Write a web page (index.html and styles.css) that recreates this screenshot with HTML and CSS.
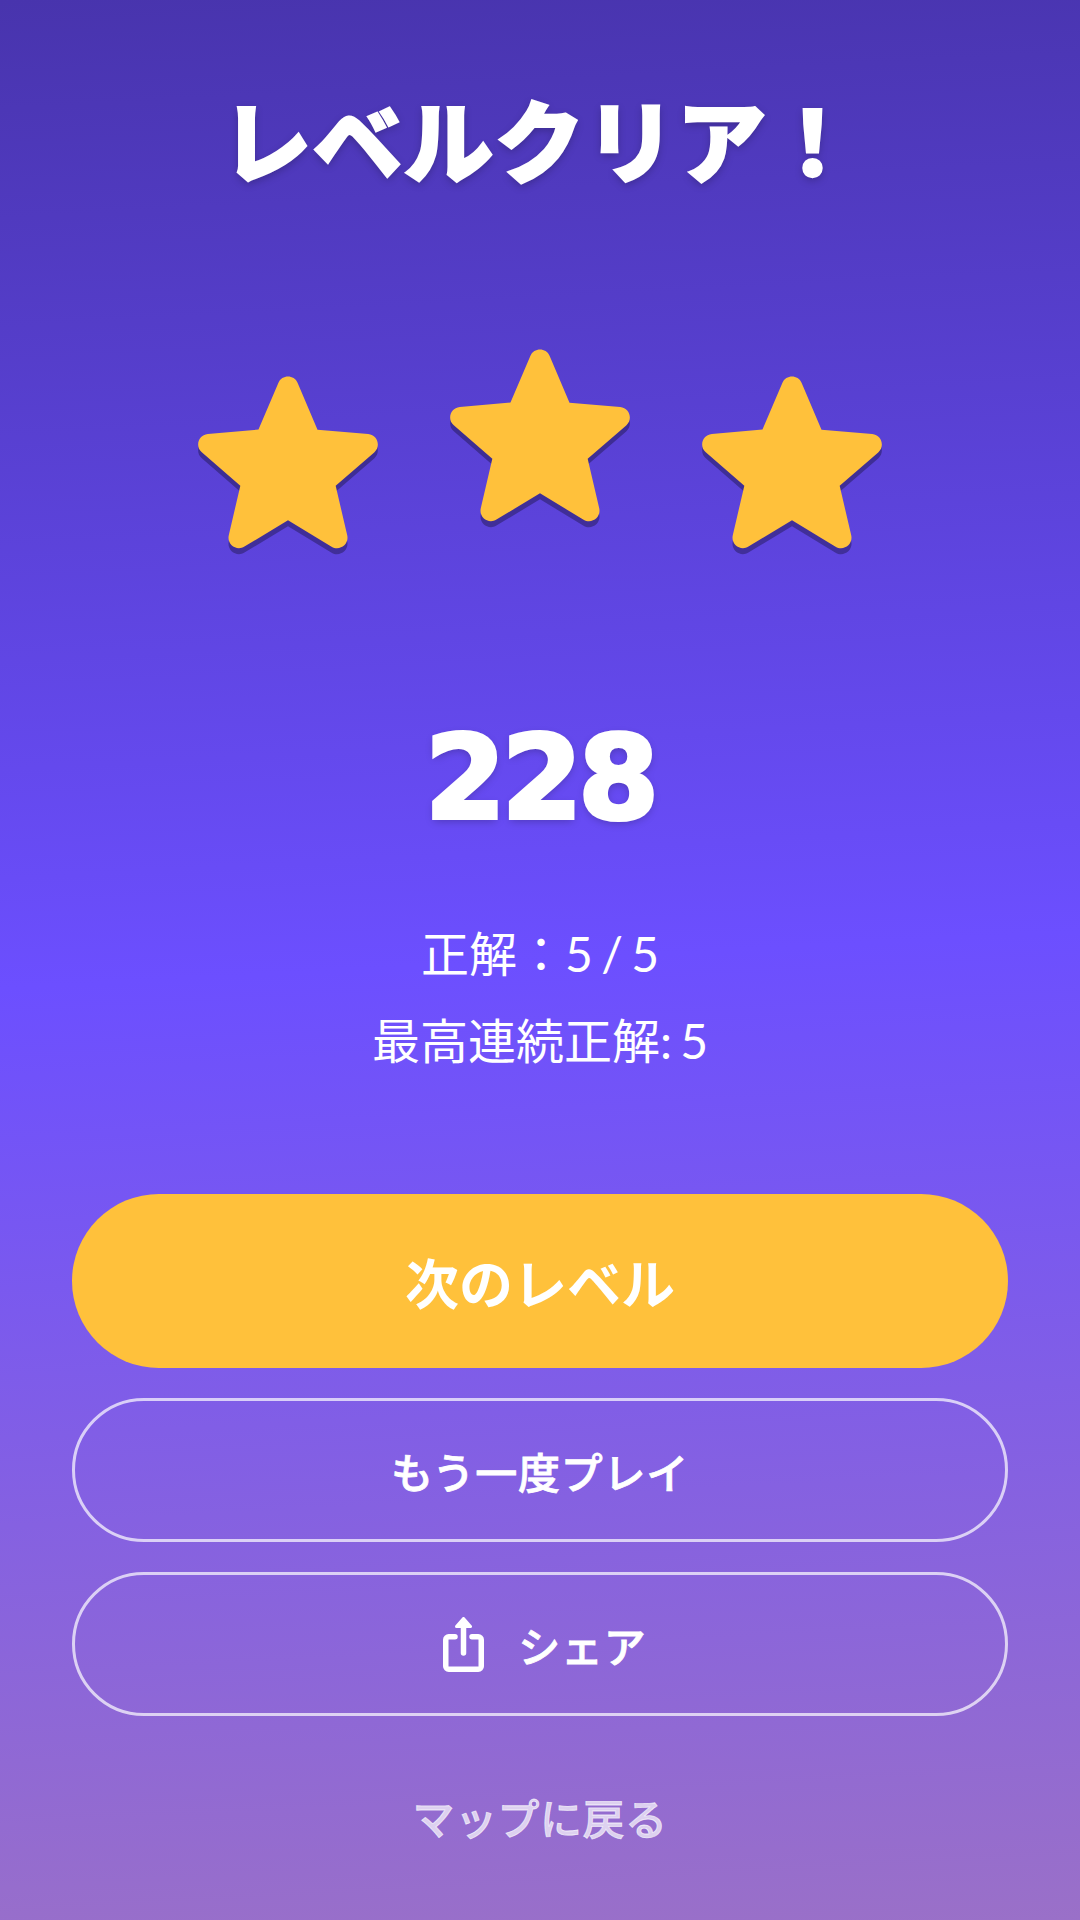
FILE: index.html
```html
<!DOCTYPE html>
<html lang="ja">
<head>
  <meta charset="UTF-8" />
  <title>レベルクリア</title>
  <link rel="stylesheet" href="styles.css">
</head>
<body>
  <main class="screen">
    <h1 class="title">レベルクリア！</h1>
    <div class="stars">
      <svg class="star" viewBox="0 0 24 24"><path d="M12 17.27l4.15 2.51c.76.46 1.69-.22 1.49-1.08l-1.1-4.72 3.67-3.18c.67-.58.31-1.68-.57-1.75l-4.83-.41-1.89-4.46c-.34-.81-1.5-.81-1.84 0L9.19 8.63l-4.83.41c-.88.07-1.24 1.17-.57 1.75l3.67 3.18-1.1 4.72c-.2.86.73 1.54 1.49 1.08l4.15-2.5z"/></svg>
      <svg class="star star-mid" viewBox="0 0 24 24"><path d="M12 17.27l4.15 2.51c.76.46 1.69-.22 1.49-1.08l-1.1-4.72 3.67-3.18c.67-.58.31-1.68-.57-1.75l-4.83-.41-1.89-4.46c-.34-.81-1.5-.81-1.84 0L9.19 8.63l-4.83.41c-.88.07-1.24 1.17-.57 1.75l3.67 3.18-1.1 4.72c-.2.86.73 1.54 1.49 1.08l4.15-2.5z"/></svg>
      <svg class="star" viewBox="0 0 24 24"><path d="M12 17.27l4.15 2.51c.76.46 1.69-.22 1.49-1.08l-1.1-4.72 3.67-3.18c.67-.58.31-1.68-.57-1.75l-4.83-.41-1.89-4.46c-.34-.81-1.5-.81-1.84 0L9.19 8.63l-4.83.41c-.88.07-1.24 1.17-.57 1.75l3.67 3.18-1.1 4.72c-.2.86.73 1.54 1.49 1.08l4.15-2.5z"/></svg>
    </div>
    <div class="score">228</div>
    <div class="stats">
      <p>正解：5 / 5</p>
      <p>最高連続正解: 5</p>
    </div>
    <div class="actions">
      <button class="btn btn-primary">次のレベル</button>
      <button class="btn btn-outline">もう一度プレイ</button>
      <button class="btn btn-outline btn-share">
        <svg class="share-icon" viewBox="0 0 41 55">
          <path class="share-line" d="M12 19.750H5.750a3 3 0 0 0-3 3v26.500a3 3 0 0 0 3 3h29.500a3 3 0 0 0 3-3V22.750a3 3 0 0 0-3-3H29" />
          <path class="share-line" d="M20.500 8v28" />
          <path class="share-head" d="M20.500 1.500 27.500 9.500H13.500z" />
        </svg>
        <span>シェア</span>
      </button>
    </div>
    <a class="back" href="#">マップに戻る</a>
  </main>
</body>
</html>
```

FILE: styles.css
```css
* {
  margin: 0;
  padding: 0;
  box-sizing: border-box;
}
body {
  width: 1080px;
  height: 1920px;
  font-family: 'Lato', 'Noto Sans CJK JP', sans-serif;
  color: #fff;
}
.screen {
  height: 1920px;
  padding: 0 72px;
  display: flex;
  flex-direction: column;
  align-items: center;
  background: linear-gradient(177deg, #4834ad 0%, #6c4fff 50%, #9a70c8 100%);
}
.title {
  margin-top: 79px;
  font-family: 'Noto Sans CJK JP', sans-serif;
  font-size: 90px;
  font-weight: 900;
  line-height: 116px;
  letter-spacing: 1px;
  -webkit-text-stroke: 2px #fff;
  text-shadow: 0 3px 9px rgba(0,0,0,0.25);
}
.stars {
  margin-top: 144px;
  display: flex;
  justify-content: center;
}
.star {
  width: 252px;
  height: 252px;
  fill: #ffc13b;
  filter: drop-shadow(0 6px 0 rgba(0,0,0,0.3));
}
.star-mid {
  transform: translateY(-27px);
}
.score {
  margin-top: 112px;
  font-family: 'DejaVu Sans', sans-serif;
  font-size: 116px;
  font-weight: 700;
  line-height: 150px;
  letter-spacing: -4px;
  -webkit-text-stroke: 4px #fff;
  text-shadow: 0 3px 9px rgba(0,0,0,0.25);
}
.stats {
  margin-top: 57px;
  text-align: center;
  font-size: 48px;
  line-height: 87px;
  word-spacing: -4px;
}
.actions {
  margin-top: 110px;
  width: 100%;
  display: flex;
  flex-direction: column;
  gap: 30px;
}
.btn {
  width: 100%;
  height: 144px;
  border-radius: 72px;
  display: flex;
  align-items: center;
  justify-content: center;
  gap: 34px;
  background: none;
  border: 3px solid rgba(255,255,255,0.7);
  color: #fff;
  font-family: 'Noto Sans CJK JP', sans-serif;
  font-size: 42px;
  font-weight: 500;
  letter-spacing: 0.75px;
  -webkit-text-stroke: 0.8px #fff;
}
.btn-primary {
  height: 174px;
  border-radius: 87px;
  border: none;
  background: #ffc13b;
  font-size: 54px;
  font-weight: 700;
  letter-spacing: 0;
  -webkit-text-stroke: 0;
}
.btn-share {
  padding-left: 10px;
}
.share-icon {
  width: 41px;
  height: 55px;
}
.share-line {
  fill: none;
  stroke: #fff;
  stroke-width: 5.5;
  stroke-linecap: round;
  stroke-linejoin: round;
}
.share-head {
  fill: #fff;
  stroke: #fff;
  stroke-width: 3;
  stroke-linejoin: round;
}
.back {
  margin-top: 71px;
  font-family: 'Noto Sans CJK JP', sans-serif;
  font-size: 42px;
  font-weight: 500;
  line-height: 60px;
  letter-spacing: 0.5px;
  color: rgba(255,255,255,0.7);
  -webkit-text-stroke: 0.8px rgba(255,255,255,0.7);
  text-decoration: none;
}
```
